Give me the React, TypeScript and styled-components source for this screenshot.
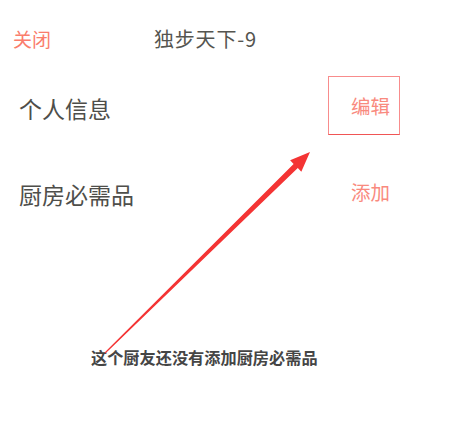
import styled, { createGlobalStyle } from "styled-components";

const GlobalStyle = createGlobalStyle`
  html, body {
    margin: 0;
    padding: 0;
    background: #fff;
  }
  body {
    font-family: "Noto Sans CJK SC", "Noto Sans", sans-serif;
  }
`;

const Page = styled.div`
  position: relative;
  width: 456px;
  height: 430px;
  overflow: hidden;
  background: #fff;
`;

const Header = styled.div`
  height: 76px;
  display: grid;
  grid-template-columns: 154px 1fr;
  align-items: center;
`;

const CloseButton = styled.span`
  padding-left: 13px;
  font-size: 19px;
  color: #fa7d6c;
`;

const Title = styled.span`
  font-size: 20px;
  letter-spacing: 0.8px;
  color: #555550;
`;

const Row = styled.div<{ $gap?: number }>`
  height: 59px;
  margin-top: ${(p) => p.$gap ?? 0}px;
  display: flex;
  align-items: center;
  justify-content: space-between;
  padding: 0 56px 0 19px;
`;

const Label = styled.span`
  font-size: 23px;
  color: #4e4e4a;
  padding-top: 4px;
`;

const Action = styled.span<{ $boxed?: boolean }>`
  box-sizing: border-box;
  width: 72px;
  height: 59px;
  display: flex;
  align-items: center;
  justify-content: flex-end;
  padding-right: 9px;
  font-size: 19.5px;
  color: #f98a7e;
  border: 1px solid ${(p) => (p.$boxed ? "#f88c8c" : "transparent")};
  border-bottom-color: ${(p) => (p.$boxed ? "#f05555" : "transparent")};
`;

const Empty = styled.div`
  margin-top: 124px;
  padding-left: 91px;
  font-size: 16.2px;
  font-weight: bold;
  color: #454545;
`;

const Arrow = styled.svg`
  position: absolute;
  left: 0;
  top: 0;
  pointer-events: none;
`;

export default function App() {
  return (
    <>
      <GlobalStyle />
      <Page>
        <Header>
          <CloseButton>关闭</CloseButton>
          <Title>独步天下-9</Title>
        </Header>
        <Row>
          <Label>个人信息</Label>
          <Action $boxed>编辑</Action>
        </Row>
        <Row $gap={27}>
          <Label>厨房必需品</Label>
          <Action>添加</Action>
        </Row>
        <Empty>这个厨友还没有添加厨房必需品</Empty>
        <Arrow width="456" height="430" viewBox="0 0 456 430">
          <polygon
            points="104.6,352.6 293.6,163.9 290.1,160.3 310,152 301.3,171.7 297.8,168.1 105.4,353.4"
            fill="#f43434"
          />
        </Arrow>
      </Page>
    </>
  );
}
